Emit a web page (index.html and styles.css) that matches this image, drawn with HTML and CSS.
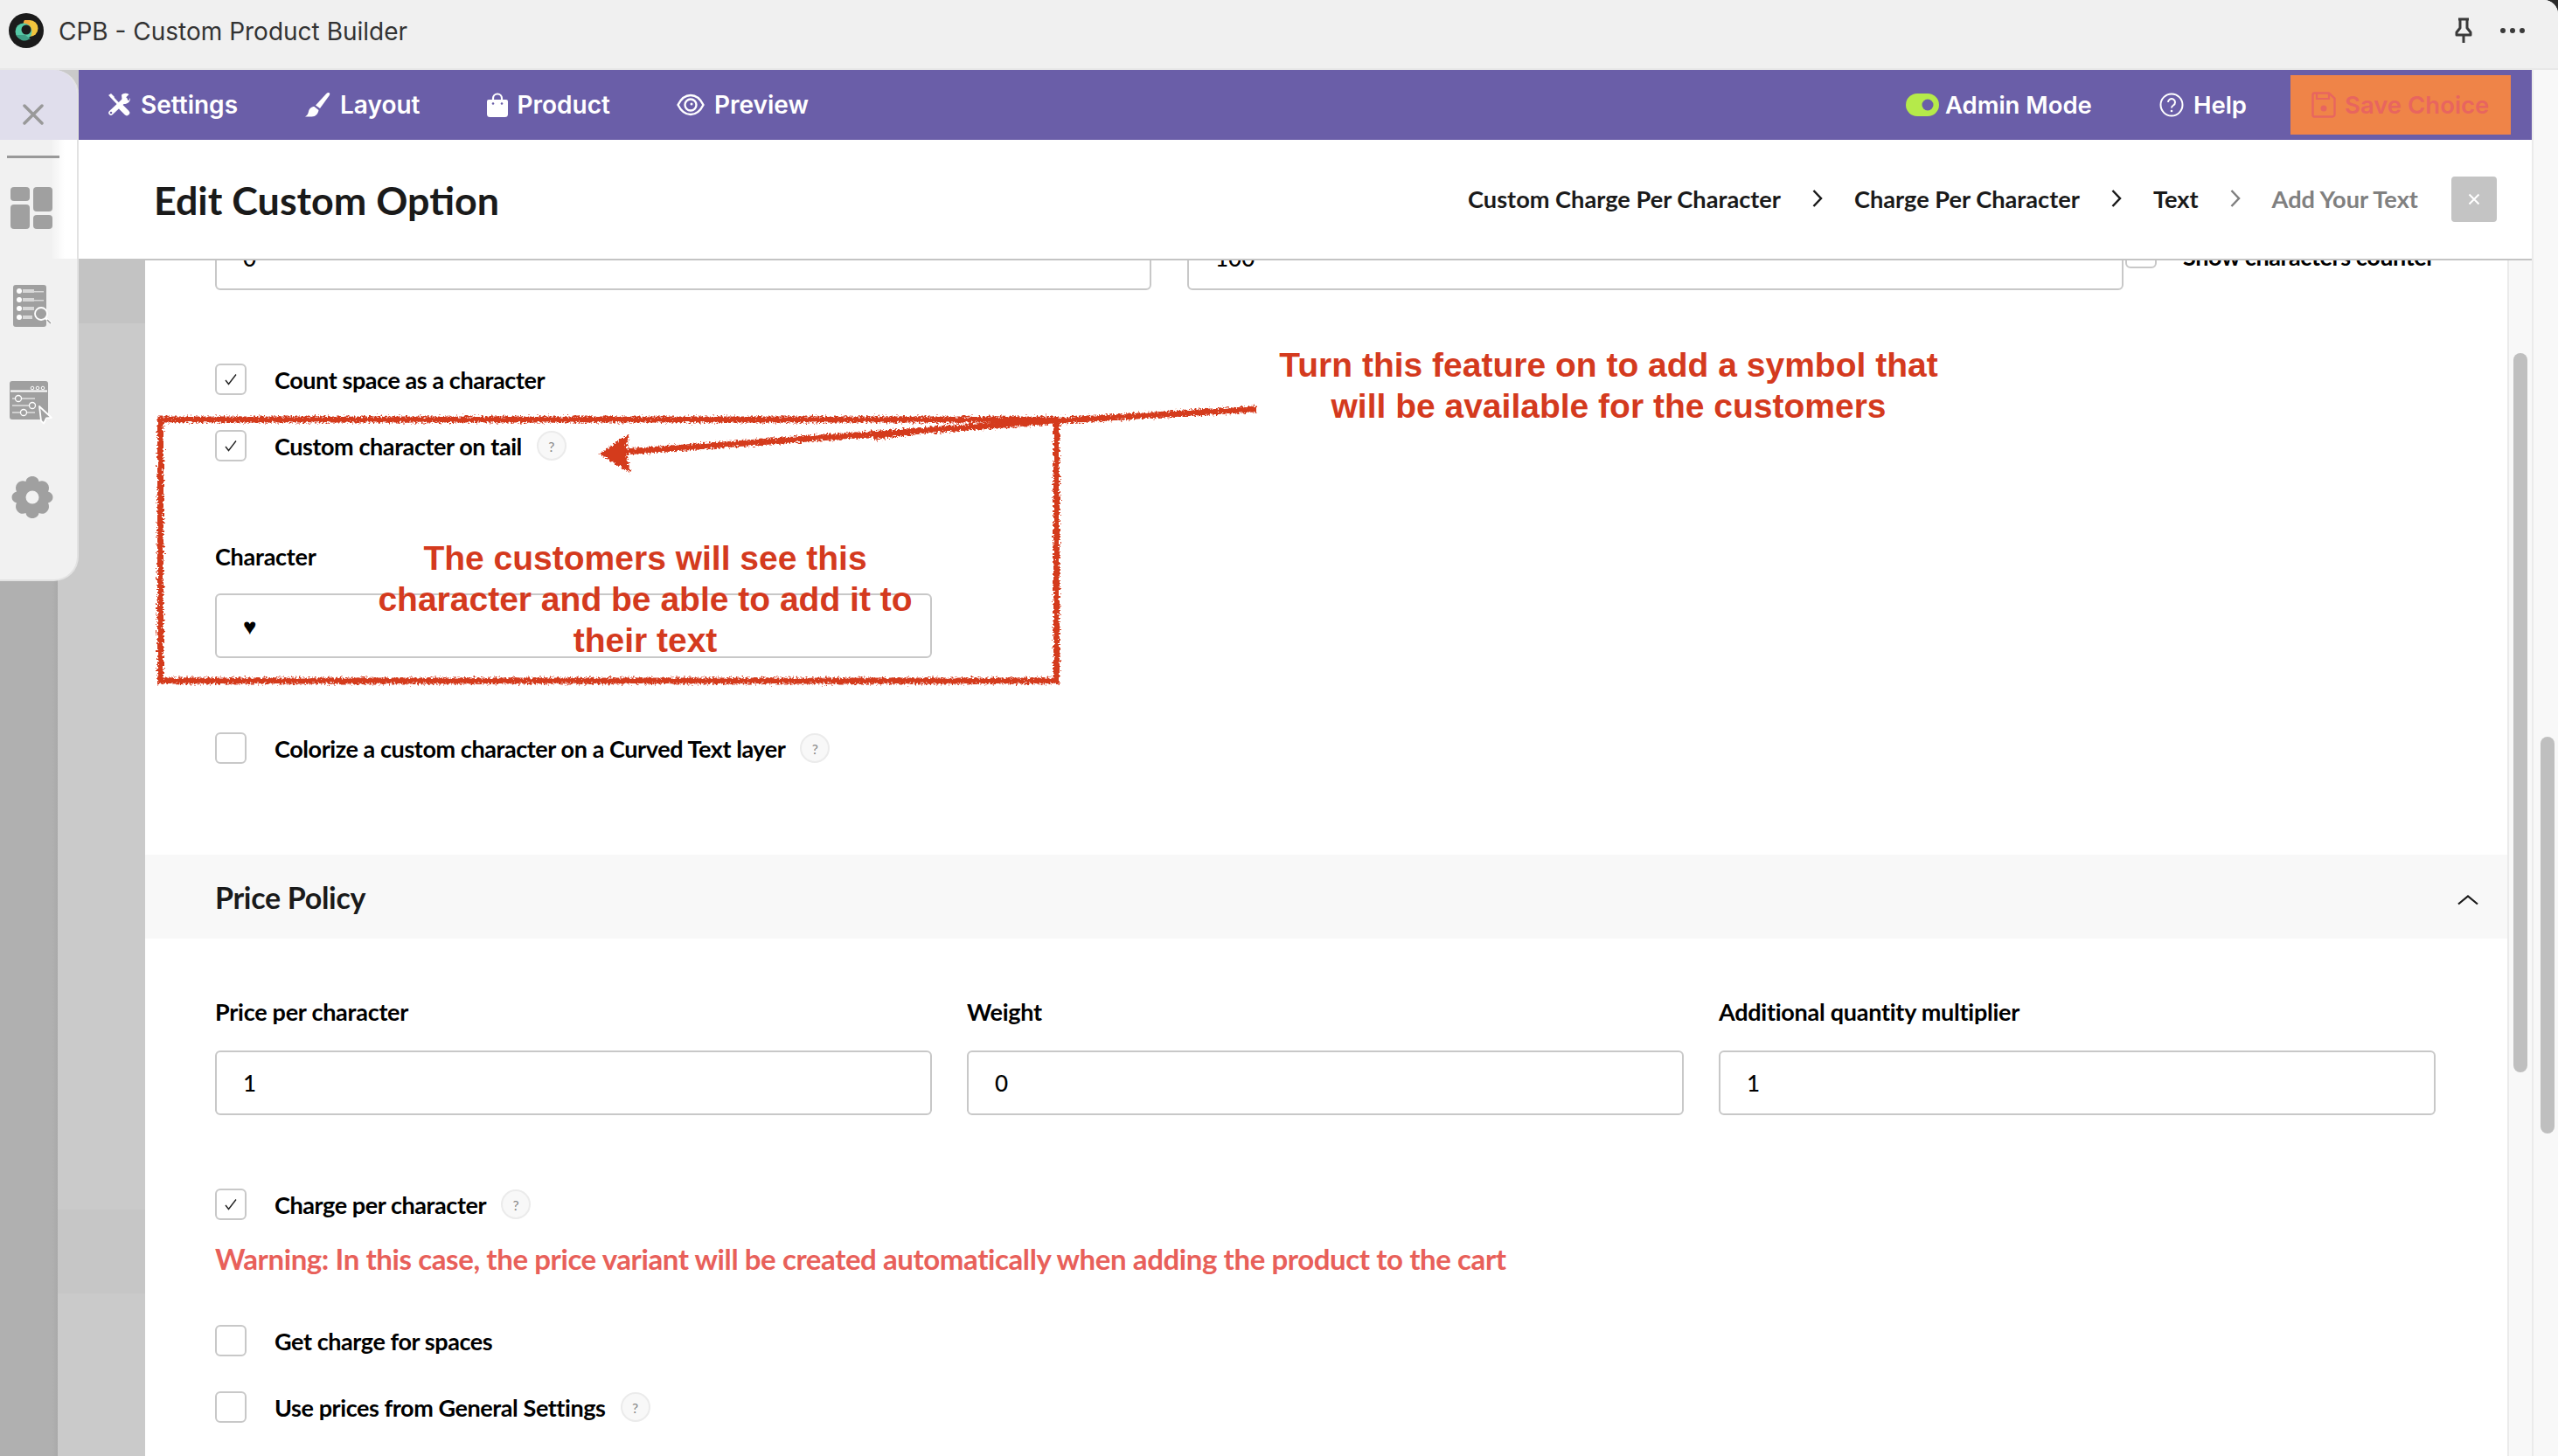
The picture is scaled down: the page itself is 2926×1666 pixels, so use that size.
FILE: index.html
```html
<!DOCTYPE html>
<html lang="en">
<head>
<meta charset="utf-8">
<title>CPB - Custom Product Builder</title>
<link rel="stylesheet" href="styles.css">
</head>
<body>
<div class="app">
  <header class="titlebar">
    <svg class="logo" viewBox="0 0 40 40" width="40" height="40">
      <circle cx="20" cy="20" r="20" fill="#1b1b1b"/>
      <circle cx="24" cy="17.5" r="9.5" fill="#f2c53d"/>
      <path d="M24 8h-6a5 5 0 0 0 0 6h6z" fill="#f2a93b"/>
      <circle cx="17" cy="21" r="9.5" fill="#56c9a6"/>
      <path d="M9 25a9.500 9.500 0 0 0 14 5h2l-6-5z" fill="#3f9f85"/>
      <circle cx="20" cy="19" r="5.500" fill="#1b1b1b"/>
    </svg>
    <span class="app-name">CPB - Custom Product Builder</span>
    <svg class="pin" viewBox="0 0 24 30" width="24" height="30">
      <path d="M6 2h12M8 2v10l-4 5v3h16v-3l-4-5V2M12 20v9" fill="none" stroke="#3a3a3a" stroke-width="3" stroke-linejoin="round"/>
    </svg>
    <svg class="dots" viewBox="0 0 30 8" width="30" height="8">
      <circle cx="4" cy="4" r="3" fill="#3a3a3a"/><circle cx="15" cy="4" r="3" fill="#3a3a3a"/><circle cx="26" cy="4" r="3" fill="#3a3a3a"/>
    </svg>
  </header>

  <div class="workspace">
    <aside class="rail">
      <div class="sidebar">
        <div class="side-close">
          <svg viewBox="0 0 24 24" width="24" height="24"><path d="M2 2l20 20M22 2L2 22" stroke="#999" stroke-width="3.500" stroke-linecap="round"/></svg>
        </div>
        <div class="side-rule"></div>
        <svg class="side-icon icon-grid" viewBox="0 0 48 48" width="48" height="48">
          <rect x="0" y="0" width="22" height="16" rx="4" fill="#a0a0a0"/>
          <rect x="26" y="0" width="22" height="28" rx="4" fill="#a0a0a0"/>
          <rect x="0" y="20" width="22" height="28" rx="4" fill="#a0a0a0"/>
          <rect x="26" y="32" width="22" height="16" rx="4" fill="#a0a0a0"/>
        </svg>
        <svg class="side-icon icon-list" viewBox="0 0 46 48" width="46" height="48">
          <rect x="0" y="0" width="38" height="48" rx="3" fill="#a0a0a0"/>
          <g fill="#fff"><circle cx="7" cy="7" r="3"/><circle cx="7" cy="17" r="3"/><circle cx="7" cy="27" r="3"/><circle cx="7" cy="37" r="3"/></g>
          <g fill="#d8d8d8"><rect x="11" y="5" width="13" height="4"/><rect x="11" y="15" width="13" height="4"/><rect x="11" y="25" width="13" height="4"/><rect x="11" y="35" width="11" height="4"/></g>
          <g fill="#d8d8d8"><rect x="24" y="7" width="11" height="1.500"/><rect x="24" y="17" width="11" height="1.500"/></g>
          <circle cx="32" cy="33" r="7" fill="#a0a0a0" stroke="#fff" stroke-width="1.800"/>
          <path d="M37 38l7 6" stroke="#fff" stroke-width="2.500"/><path d="M39 40l4 4" stroke="#999" stroke-width="1.500"/>
        </svg>
        <svg class="side-icon icon-panel" viewBox="0 0 50 50" width="50" height="50">
          <rect x="0" y="0" width="44" height="44" rx="3" fill="#a0a0a0"/>
          <path d="M1 11.500h42" stroke="#fff" stroke-width="1.800"/>
          <g fill="none" stroke="#fff" stroke-width="1"><circle cx="26" cy="8" r="1.800"/><circle cx="32" cy="8" r="1.800"/><circle cx="38" cy="8" r="1.800"/></g>
          <g stroke="#e0e0e0" stroke-width="1.300"><path d="M3 20h26M3 28h26M3 36h26"/></g>
          <g fill="#a0a0a0" stroke="#fff" stroke-width="1.300"><circle cx="10" cy="20" r="3.500"/><circle cx="26" cy="28" r="3.500"/><circle cx="16" cy="36" r="3.500"/></g>
          <path d="M34 29l14 13-6 .5 -3 6-3-3z" fill="#a0a0a0" stroke="#fff" stroke-width="1.800" stroke-linejoin="round"/>
        </svg>
        <svg class="side-icon icon-gear" viewBox="0 0 48 48" width="48" height="48">
          <path d="M24 0c4 0 7 2.500 7.500 6 3-1.500 7-1 9.500 2 2.500 3 2.500 6.500 1 9.500 3.500 1 5.500 3.500 5.500 6.500s-2 5.500-5.500 6.500c1.500 3 1.500 6.500-1 9.500-2.500 3-6.500 3.500-9.500 2C31 45.500 28 48 24 48s-7-2.500-7.500-6c-3 1.500-7 1-9.500-2-2.500-3-2.500-6.500-1-9.500C2.500 29.500.5 27 .5 24s2-5.500 5.500-6.500C4.500 14.500 4.500 11 7 8c2.500-3 6.500-3.500 9.500-2C17 2.500 20 0 24 0z" fill="#a0a0a0"/>
          <circle cx="24" cy="24" r="7.500" fill="#f2f2f2"/>
        </svg>
      </div>
    </aside>

    <div class="main">
      <nav class="nav">
        <a class="nav-item nav-left">
          <svg viewBox="0 0 28 28" width="28" height="28">
            <g stroke="#fff" stroke-linecap="round" fill="none">
              <path d="M5 4l18 19" stroke-width="3"/><path d="M17 17l6 6" stroke-width="6.500"/>
              <path d="M21 8L5 23" stroke-width="5.500"/>
            </g>
            <path d="M17 2.500a6.500 6.500 0 0 1 8.500-.5l-3.500 3.500 1 2.500 2.500 1L27 6a6.500 6.500 0 0 1-9 6.500z" fill="#fff"/>
            <path d="M2 3l3-2 4 4-2 2z" fill="#fff"/>
            <circle cx="5" cy="23" r="1.300" fill="#6a5ea8"/>
          </svg>
          Settings
        </a>
        <a class="nav-item nav-left">
          <svg viewBox="0 0 30 28" width="30" height="28">
            <path d="M28 0c1.500 .5 1.500 2 .5 3.500L18 18l-5-3.500L25 1.500c1-1 2-1.800 3-1.500z" fill="#fff"/>
            <path d="M11.500 16l5 4c-.5 4-3.500 7.500-8 7.500H1c2.500-1.500 3.500-3.500 4-6 .5-3 3-5.500 6.500-5.500z" fill="#fff"/>
          </svg>
          Layout
        </a>
        <a class="nav-item nav-left">
          <svg viewBox="0 0 24 28" width="24" height="28">
            <path d="M7 11V6.500a5 5 0 0 1 10 0V11" fill="none" stroke="#fff" stroke-width="2.200"/>
            <path d="M2 8h20a2 2 0 0 1 2 2v14.500a3.500 3.500 0 0 1-3.500 3.500h-17A3.500 3.500 0 0 1 0 24.500V10a2 2 0 0 1 2-2z" fill="#fff"/>
            <circle cx="7" cy="12.500" r="1.300" fill="#6a5ea8"/><circle cx="17" cy="12.500" r="1.300" fill="#6a5ea8"/>
          </svg>
          Product
        </a>
        <a class="nav-item nav-left">
          <svg viewBox="0 0 32 26" width="32" height="26">
            <path d="M1.500 13C5 6 10 2 16 2s11 4 14.500 11C27 20 22 24 16 24S5 20 1.500 13z" fill="none" stroke="#fff" stroke-width="2.400"/>
            <circle cx="16" cy="13" r="6.500" fill="none" stroke="#fff" stroke-width="2.400"/>
            <circle cx="17" cy="12" r="1.500" fill="#fff"/>
          </svg>
          Preview
        </a>
        <a class="nav-item nav-admin">
          <svg viewBox="0 0 38 26" width="38" height="26">
            <rect width="38" height="26" rx="13" fill="#b5ea4a"/>
            <circle cx="25" cy="13" r="6.500" fill="#6a5ea8"/>
          </svg>
          Admin Mode
        </a>
        <a class="nav-item nav-help">
          <svg viewBox="0 0 28 28" width="28" height="28">
            <circle cx="14" cy="14" r="12.500" fill="none" stroke="#fff" stroke-width="2"/>
            <path d="M10 11a4 4 0 1 1 6 3.500c-1.500 1-2 1.500-2 3" fill="none" stroke="#fff" stroke-width="2"/>
            <circle cx="14" cy="21" r="1.300" fill="#fff"/>
          </svg>
          Help
        </a>
        <button class="save">
          <svg viewBox="0 0 28 30" width="28" height="30">
            <path d="M3 1.500h17l6.500 6V26a2.500 2.500 0 0 1-2.500 2.500H3A2 2 0 0 1 1.500 26V3A2 2 0 0 1 3 1.500z" fill="none" stroke="#e8655f" stroke-width="2.400"/>
            <path d="M6 2v6h14V2" fill="none" stroke="#e8655f" stroke-width="2.200"/>
            <circle cx="14" cy="19" r="3.500" fill="#e8655f"/>
          </svg>
          Save Choice
        </button>
      </nav>

      <div class="head">
        <h1 class="head-title">Edit Custom Option</h1>
        <div class="crumbs">
          <span class="crumb">Custom Charge Per Character</span>
          <svg class="chev" viewBox="0 0 12 20" width="12" height="20"><path d="M1.500 1l8.500 9-8.500 9" fill="none" stroke="#1a1a1a" stroke-width="2.500"/></svg>
          <span class="crumb">Charge Per Character</span>
          <svg class="chev" viewBox="0 0 12 20" width="12" height="20"><path d="M1.500 1l8.500 9-8.500 9" fill="none" stroke="#1a1a1a" stroke-width="2.500"/></svg>
          <span class="crumb">Text</span>
          <svg class="chev chev-last" viewBox="0 0 12 20" width="12" height="20"><path d="M1.500 1l8.500 9-8.500 9" fill="none" stroke="#808080" stroke-width="2.500"/></svg>
          <span class="crumb crumb-current">Add Your Text</span>
        </div>
        <div class="head-close">
          <svg viewBox="0 0 14 14" width="14" height="14"><path d="M1.500 1.500l11 11M12.500 1.500l-11 11" stroke="#fff" stroke-width="2"/></svg>
        </div>
      </div>

      <div class="scrollarea">
        <div class="gutter"></div>
        <main class="panel">
          <div class="form">
            <div class="row-top">
              <div class="field field-wide">0</div>
              <div class="field field-wide">100</div>
              <span class="box box-top"></span>
              <span class="top-label">Show characters counter</span>
            </div>

            <div class="check check-first"><span class="box"><svg viewBox="0 0 16 14" width="16" height="14"><path d="M2 8l3.500 4.500L14 1.500" fill="none" stroke="#222" stroke-width="1.400"/></svg></span><span class="check-label">Count space as a character</span></div>
            <div class="check check-next"><span class="box"><svg viewBox="0 0 16 14" width="16" height="14"><path d="M2 8l3.500 4.500L14 1.500" fill="none" stroke="#222" stroke-width="1.400"/></svg></span><span class="check-label">Custom character on tail</span><span class="hint">?</span></div>

            <div class="label label-character">Character</div>
            <div class="field field-half">♥</div>

            <div class="check check-colorize"><span class="box"></span><span class="check-label">Colorize a custom character on a Curved Text layer</span><span class="hint">?</span></div>
          </div>

          <div class="band">
            <h2 class="band-title">Price Policy</h2>
            <svg class="band-chev" viewBox="0 0 24 14" width="24" height="14"><path d="M1 12.500l11-9 11 9" fill="none" stroke="#1a1a1a" stroke-width="2.200"/></svg>
          </div>

          <div class="form">
            <div class="grid3">
              <div><div class="label">Price per character</div><div class="field">1</div></div>
              <div><div class="label">Weight</div><div class="field">0</div></div>
              <div><div class="label">Additional quantity multiplier</div><div class="field">1</div></div>
            </div>
            <div class="check check-charge"><span class="box"><svg viewBox="0 0 16 14" width="16" height="14"><path d="M2 8l3.500 4.500L14 1.500" fill="none" stroke="#222" stroke-width="1.400"/></svg></span><span class="check-label">Charge per character</span><span class="hint">?</span></div>
            <p class="warning">Warning: In this case, the price variant will be created automatically when adding the product to the cart</p>
            <div class="check check-spaces"><span class="box"></span><span class="check-label">Get charge for spaces</span></div>
            <div class="check check-next"><span class="box"></span><span class="check-label">Use prices from General Settings</span><span class="hint">?</span></div>
          </div>
        </main>
        <div class="track"><div class="thumb thumb-inner"></div></div>
      </div>
    </div>

    <div class="outer-track"><div class="thumb thumb-outer"></div></div>
  </div>

  <svg class="scribble" viewBox="0 0 2926 1666" width="2926" height="1666">
    <defs>
      <filter id="rough" filterUnits="userSpaceOnUse" x="150" y="440" width="1320" height="370">
        <feTurbulence type="fractalNoise" baseFrequency="0.45" numOctaves="2" seed="4"/>
        <feDisplacementMap in="SourceGraphic" scale="8" xChannelSelector="R" yChannelSelector="G"/>
      </filter>
    </defs>
    <g filter="url(#rough)">
      <rect x="183.500" y="480" width="1025" height="299" fill="none" stroke="#d43a1e" stroke-width="7"/>
      <path d="M1437 468L1217 481 700 518" fill="none" stroke="#d43a1e" stroke-width="7"/>
      <path d="M1217 476L1000 495 1000 503z" fill="#d43a1e"/>
      <path d="M685 520L720 496 715 516 722 541z" fill="#d43a1e"/>
    </g>
  </svg>
  <div class="note note-feature">Turn this feature on to add a symbol that<br>will be available for the customers</div>
  <div class="note note-character">The customers will see this<br>character and be able to add it to<br>their text</div>
</div>
</body>
</html>
```
FILE: styles.css
```css
* { box-sizing: border-box; }
html, body { margin: 0; padding: 0; }
body { background: #2a2a2a; font-family: "Lato", "Liberation Sans", sans-serif; color: #000; }

.app { position: relative; width: 2926px; height: 1666px; overflow: hidden; display: flex; flex-direction: column; background: #f8f8f8; border-top-right-radius: 16px; }

/* title bar */
.titlebar { flex: none; height: 80px; display: flex; align-items: center; padding: 0 37px 6px 10px; background: #f0f0f0; border-bottom: 2px solid #e8e8e8; font-family: "Inter", sans-serif; }
.logo { flex: none; margin-top: -2px; }
.app-name { margin-left: 17px; font-size: 28px; color: #333; }
.pin { margin-left: auto; margin-top: -2px; }
.dots { margin-left: 29px; margin-top: -2px; }

/* workspace */
.workspace { flex: 1; display: flex; min-height: 0; }
.rail { flex: none; width: 90px; background: linear-gradient(#c6c6c6, #c6c6c6) no-repeat 66px 1304px / 24px 96px, linear-gradient(to right, #b0b0b0 60px, #a9a9a9 66px, #cacaca 66px); }
.sidebar { height: 585px; display: flex; flex-direction: column; align-items: flex-start; background-color: #f1f1f1; background-image: linear-gradient(to right, rgba(255,255,255,0) 58px, #fff 74px); background-size: 100% 136px; background-position: 0 80px; background-repeat: no-repeat; border-right: 2px solid #e2e2e2; border-bottom: 2px solid #e2e2e2; border-radius: 0 28px 28px 0; overflow: hidden; }
.side-close { flex: none; width: 100%; height: 80px; padding: 39px 0 0 26px; background: #e0deec; }
.side-close svg { display: block; }
.side-rule { flex: none; width: 60px; height: 3px; margin: 18px 0 0 8px; background: #999; }
.side-icon { display: block; flex: none; }
.icon-grid { margin: 33px 0 0 12px; }
.icon-list { margin: 64px 0 0 15px; }
.icon-panel { margin: 62px 0 0 11px; }
.icon-gear { margin: 59px 0 0 13px; }

.main { flex: none; width: 2806px; display: flex; flex-direction: column; min-height: 0; }

/* nav */
.nav { flex: none; height: 80px; display: flex; align-items: center; padding: 0 24px 0 32px; background: #6a5ea8; }
.nav-item { display: flex; align-items: center; gap: 11px; font-family: "Inter", sans-serif; font-weight: 600; color: #fff; white-space: nowrap; }
.nav-item svg { flex: none; }
.nav-left { margin-right: 76px; font-size: 28px; }
.nav-admin { margin-left: auto; gap: 7px; margin-right: 77px; font-size: 27.5px; }
.nav-help { margin-right: 50px; font-size: 27.5px; }
.save { display: flex; align-items: center; gap: 10px; width: 252px; height: 68px; padding: 0 0 0 24px; border: 0; background: #ef8448; color: #e8655f; font-family: "Inter", sans-serif; font-weight: 600; font-size: 27.5px; white-space: nowrap; }

/* header */
.head { flex: none; height: 138px; display: flex; align-items: center; padding: 0 40px 0 86px; background: #fff; border-bottom: 2px solid #c4c4c4; }
.head-title { margin: 2px 0 0; font-size: 44.8px; font-weight: 700; color: #1a1a1a; }
.crumbs { margin-left: auto; margin-bottom: 2px; display: flex; align-items: center; font-size: 27.2px; font-weight: 700; color: #1a1a1a; }
.chev { margin: 0 36px; }
.chev-last { margin: 0 36px; }
.crumb-current { color: #808080; font-weight: 700; }
.head-close { flex: none; display: flex; align-items: center; justify-content: center; width: 52px; height: 52px; margin-left: 38px; background: #c4c4c4; border-radius: 4px; }

/* scrolling area */
.scrollarea { flex: 1; display: flex; min-height: 0; }
.gutter { flex: none; width: 76px; background: linear-gradient(to bottom, #c3c3c3 72px, #cacaca 72px, #cacaca 1086px, #c6c6c6 1086px, #c6c6c6 1182px, #cacaca 1182px); }
.panel { flex: 1; min-width: 0; overflow: hidden; background: #fff; }
.track { flex: none; width: 28px; padding: 106px 5px 0 5px; background: #f8f8f8; border-left: 2px solid #ebebeb; }
.thumb { width: 16px; border-radius: 8px; background: #bfbfbf; }
.thumb-inner { height: 823px; }
.outer-track { flex: 1; padding: 763px 0 0 8px; border-left: 2px solid #ebebeb; background: #f8f8f8; }
.thumb-outer { height: 454px; }

/* form */
.form { padding: 0 81px 0 80px; }
.row-top { display: flex; align-items: flex-start; gap: 41px; margin-top: -40px; }
.field { display: flex; align-items: center; height: 74px; padding: 0 30px; background: #fff; border: 2px solid #c8c8c8; border-radius: 6px; font-size: 26px; font-weight: 500; color: #000; }
.field-wide { flex: none; width: 1071px; }
.field-half { width: 820px; }
.box { flex: none; display: flex; align-items: center; justify-content: center; width: 36px; height: 36px; background: #fff; border: 2px solid #c8c8c8; border-radius: 6px; }
.box-top { margin: 13px 0 0 -39px; }
.top-label { margin: 19px 0 0 -11px; font-size: 27px; font-weight: 700; letter-spacing: -0.4px; white-space: nowrap; }
.check { display: flex; align-items: center; height: 36px; }
.check-label { margin-left: 32px; font-size: 27px; font-weight: 700; letter-spacing: -0.42px; white-space: nowrap; }
.check-first { margin-top: 84px; }
.check-next { margin-top: 40px; }
.check-colorize { margin-top: 85px; }
.check-charge { margin-top: 84px; }
.check-spaces { margin-top: 56px; }
.hint { flex: none; display: flex; align-items: center; justify-content: center; width: 34px; height: 34px; margin-left: 17px; background: #f8f8f8; border: 2px solid #ebebeb; border-radius: 50%; font-size: 16px; color: #888; }
.label { height: 30px; font-size: 27px; font-weight: 700; line-height: 30px; letter-spacing: -0.26px; white-space: nowrap; }
.label-character { margin-top: 94px; margin-bottom: 27px; }
.band { display: flex; align-items: center; justify-content: space-between; height: 96px; margin-top: 104px; padding: 0 33px 0 80px; background: #f8f8f8; }
.band-title { margin: 0; font-size: 34px; font-weight: 700; letter-spacing: -0.3px; color: #1a1a1a; }
.band-chev { margin-top: 6px; }
.grid3 { display: grid; grid-template-columns: repeat(3, 820px); column-gap: 40px; padding-top: 69px; }
.grid3 .label { margin-bottom: 29px; }
.warning { margin: 24px 0 0; font-size: 33px; line-height: 40px; font-weight: 700; letter-spacing: -0.41px; color: #e8605a; white-space: nowrap; }

/* annotations */
.scribble { position: absolute; left: 0; top: 0; pointer-events: none; }
.note { position: absolute; font-family: "Liberation Sans", Arial, sans-serif; font-weight: 700; font-size: 39px; line-height: 47px; color: #d43a1e; text-align: center; white-space: nowrap; }
.note-feature { left: 1440px; top: 394px; width: 800px; }
.note-character { left: 338px; top: 615px; width: 800px; }
```
